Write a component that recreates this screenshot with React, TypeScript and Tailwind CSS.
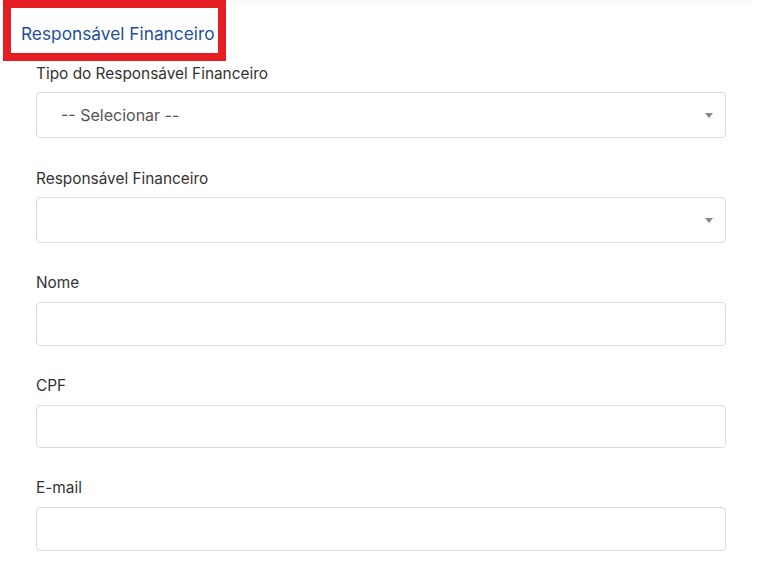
import React from "react";

const font = { fontFamily: "Inter, 'Noto Sans', sans-serif" };

function Label({ children }: { children: React.ReactNode }) {
  return <div className="text-[15.4px] leading-[20px] text-[#333333]">{children}</div>;
}

function Caret() {
  return (
    <svg width="8" height="5" viewBox="0 0 8 5" className="shrink-0">
      <path d="M0 0 L8 0 L4 5 Z" fill="#888888" />
    </svg>
  );
}

export default function App() {
  return (
    <div className="relative w-[757px] h-[574px] bg-white overflow-hidden" style={font}>
      <div className="absolute top-0 left-0 right-[5px] h-[5px] bg-[#fafafa]" />
      <div className="relative ml-[3px] w-[223px] h-[61px] border-[8px] border-[#e41e22] bg-white flex items-center pl-[10px] pt-[7px]">
        <span className="text-[17.3px] text-[#1f4f9c] whitespace-nowrap">Responsável Financeiro</span>
      </div>
      <div className="pl-[36px] pr-[31px] pt-[3px] flex flex-col">
        <Label>Tipo do Responsável Financeiro</Label>
        <div className="mt-[8px] h-[46px] rounded-[4px] border border-[#dcdcdc] flex items-center justify-between pl-[24px] pr-[12px]">
          <span className="text-[16px] text-[#555555]">-- Selecionar --</span>
          <Caret />
        </div>
        <div className="mt-[31px]">
          <Label>Responsável Financeiro</Label>
        </div>
        <div className="mt-[8px] h-[46px] rounded-[4px] border border-[#dcdcdc] flex items-center justify-end pr-[12px]">
          <Caret />
        </div>
        <div className="mt-[30px]">
          <Label>Nome</Label>
        </div>
        <div className="mt-[9px] h-[44px] rounded-[4px] border border-[#dcdcdc]" />
        <div className="mt-[30px]">
          <Label>CPF</Label>
        </div>
        <div className="mt-[9px] h-[43px] rounded-[4px] border border-[#dcdcdc]" />
        <div className="mt-[30px]">
          <Label>E-mail</Label>
        </div>
        <div className="mt-[9px] h-[44px] rounded-[4px] border border-[#dcdcdc]" />
      </div>
    </div>
  );
}
